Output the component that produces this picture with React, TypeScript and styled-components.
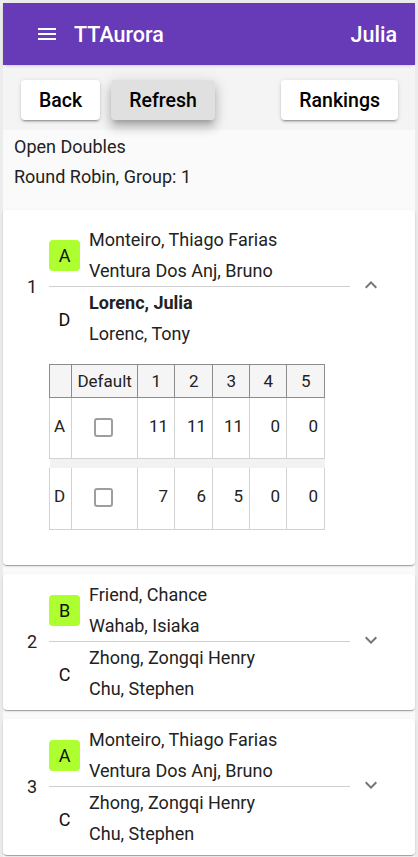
import React from "react";
import styled, { createGlobalStyle } from "styled-components";

const GlobalStyle = createGlobalStyle`
  html, body { margin: 0; padding: 0; }
  body {
    font-family: Roboto, "Noto Sans", Arial, sans-serif;
    background: #ededed;
    color: rgba(0,0,0,0.87);
  }
  * { box-sizing: border-box; }
`;

const Frame = styled.div`
  border: 3px solid #ececec;
  border-bottom: none;
  min-height: 857px;
  background: #fafafa;
`;

const AppBar = styled.header`
  height: 62px;
  background: #673ab7;
  color: #fff;
  display: flex;
  align-items: center;
  padding: 0 18px 0 31px;
  box-shadow: 0 2px 4px -1px rgba(0,0,0,.2);
`;

const MenuBtn = styled.span`
  display: flex;
  width: 26px;
  height: 26px;
  align-items: center;
  justify-content: center;
  margin-right: 14px;
`;

const Title = styled.div`
  font-size: 21.5px;
  font-weight: 500;
  flex: 1;
`;

const User = styled.div`
  font-size: 21.5px;
  font-weight: 500;
`;

const ButtonBar = styled.div`
  margin-top: 3px;
  background: #f4f4f4;
  display: flex;
  align-items: center;
  padding: 12px 17px 10px 18px;
  gap: 11px;
`;

const Btn = styled.button<{ $raised?: boolean; $push?: boolean }>`
  height: 40px;
  padding: 0 18px;
  border: none;
  border-radius: 4px;
  font-family: Roboto, Arial, sans-serif;
  font-size: 19.5px;
  font-weight: 500;
  color: #000;
  background: ${(p) => (p.$raised ? "#e0e0e0" : "#fff")};
  margin-left: ${(p) => (p.$push ? "auto" : "0")};
  box-shadow: ${(p) =>
    p.$raised
      ? "0 5px 5px -3px rgba(0,0,0,.2), 0 8px 10px 1px rgba(0,0,0,.14), 0 3px 14px 2px rgba(0,0,0,.12)"
      : "0 3px 1px -2px rgba(0,0,0,.2), 0 2px 2px 0 rgba(0,0,0,.14), 0 1px 5px 0 rgba(0,0,0,.12)"};
`;

const Info = styled.div`
  padding: 2px 11px 0 11px;
`;

const InfoLine = styled.div`
  font-size: 18px;
  line-height: 30px;
  color: #222;
`;

const List = styled.div`
  margin-top: 18px;
  display: flex;
  flex-direction: column;
  gap: 9px;
`;

const Card = styled.section<{ $expanded?: boolean }>`
  background: #fff;
  border-radius: 4px;
  padding: ${(p) => (p.$expanded ? "14px 0 35px" : "5px 0 6px")};
  box-shadow: 0 2px 1px -1px rgba(0,0,0,.2), 0 1px 1px 0 rgba(0,0,0,.14), 0 1px 3px 0 rgba(0,0,0,.12);
`;

const MatchRow = styled.div`
  display: flex;
  align-items: center;
`;

const Num = styled.div`
  width: 46px;
  padding-left: 24px;
  font-size: 18px;
  color: #222;
`;

const Teams = styled.div`
  width: 301px;
`;

const Divider = styled.div`
  height: 1px;
  background: #cfcfcf;
`;

const TeamRow = styled.div`
  display: flex;
  align-items: center;
  gap: 9px;
`;

const Letter = styled.div<{ $badge?: boolean }>`
  width: 31px;
  height: 31px;
  border-radius: 4px;
  background: ${(p) => (p.$badge ? "#adff2f" : "transparent")};
  display: flex;
  align-items: center;
  justify-content: center;
  font-size: 18px;
  color: #111;
  padding-top: ${(p) => (p.$badge ? "0" : "3px")};
`;

const Names = styled.div``;

const Name = styled.div<{ $me?: boolean }>`
  font-size: 18px;
  line-height: 31px;
  font-weight: ${(p) => (p.$me ? 700 : 400)};
  color: #222;
  white-space: nowrap;
`;

const Chevron = styled.span<{ $up?: boolean }>`
  display: flex;
  margin-left: 9px;
  margin-top: -4px;
  transform: ${(p) => (p.$up ? "rotate(180deg)" : "none")};
`;

const TableWrap = styled.div`
  margin: 15px 0 0 46px;
`;

const ScoreTable = styled.table`
  border-collapse: collapse;
  font-size: 17px;
  color: #222;
`;

const Th = styled.th<{ $w: number }>`
  width: ${(p) => p.$w}px;
  height: 33px;
  background: #f5f5f5;
  border: 1px solid #8c8c8c;
  font-weight: 400;
  text-align: center;
  padding: 0;
`;

const Td = styled.td<{ $align?: string; $h: number }>`
  height: ${(p) => p.$h}px;
  border: 1px solid #d2d2d2;
  border-top: none;
  text-align: ${(p) => p.$align || "right"};
  padding: 0 6px 4px 4px;
  vertical-align: middle;
`;

const GapRow = styled.tr`
  height: 9px;
  background: #f2f2f2;
`;

const Box = styled.span`
  display: inline-block;
  width: 19px;
  height: 19px;
  border: 2px solid #9e9e9e;
  border-radius: 3px;
  vertical-align: middle;
`;

const MenuIcon = () => (
  <svg width="24" height="24" viewBox="0 0 24 24" fill="#fff">
    <path d="M3 18h18v-2H3zm0-5h18v-2H3zm0-7v2h18V6z" />
  </svg>
);

const ExpandIcon = () => (
  <svg width="24" height="24" viewBox="0 0 24 24" fill="#757575">
    <path d="M16.59 8.59 12 13.17 7.41 8.59 6 10l6 6 6-6z" />
  </svg>
);

type Team = { letter: string; badge?: boolean; players: { name: string; me?: boolean }[] };
type Match = { num: number; t1: Team; t2: Team; expanded?: boolean; scores?: number[][] };

const matches: Match[] = [
  {
    num: 1,
    expanded: true,
    t1: { letter: "A", badge: true, players: [{ name: "Monteiro, Thiago Farias" }, { name: "Ventura Dos Anj, Bruno" }] },
    t2: { letter: "D", players: [{ name: "Lorenc, Julia", me: true }, { name: "Lorenc, Tony" }] },
    scores: [
      [11, 11, 11, 0, 0],
      [7, 6, 5, 0, 0],
    ],
  },
  {
    num: 2,
    t1: { letter: "B", badge: true, players: [{ name: "Friend, Chance" }, { name: "Wahab, Isiaka" }] },
    t2: { letter: "C", players: [{ name: "Zhong, Zongqi Henry" }, { name: "Chu, Stephen" }] },
  },
  {
    num: 3,
    t1: { letter: "A", badge: true, players: [{ name: "Monteiro, Thiago Farias" }, { name: "Ventura Dos Anj, Bruno" }] },
    t2: { letter: "C", players: [{ name: "Zhong, Zongqi Henry" }, { name: "Chu, Stephen" }] },
  },
];

const TeamBlock = ({ team }: { team: Team }) => (
  <TeamRow>
    <Letter $badge={team.badge}>{team.letter}</Letter>
    <Names>
      {team.players.map((p) => (
        <Name key={p.name} $me={p.me}>
          {p.name}
        </Name>
      ))}
    </Names>
  </TeamRow>
);

const widths = [22, 66, 37, 38, 37, 37, 38];

const Scores = ({ m }: { m: Match }) => (
  <TableWrap>
    <ScoreTable>
      <thead>
        <tr>
          <Th $w={widths[0]}></Th>
          <Th $w={widths[1]}>Default</Th>
          {[1, 2, 3, 4, 5].map((g, i) => (
            <Th key={g} $w={widths[i + 2]}>
              {g}
            </Th>
          ))}
        </tr>
      </thead>
      <tbody>
        <tr>
          <Td $h={61} $align="left">{m.t1.letter}</Td>
          <Td $h={61} $align="center"><Box /></Td>
          {m.scores![0].map((s, i) => (
            <Td $h={61} key={i}>{s}</Td>
          ))}
        </tr>
        <GapRow>
          <td colSpan={7}></td>
        </GapRow>
        <tr>
          <Td $h={62} $align="left">{m.t2.letter}</Td>
          <Td $h={62} $align="center"><Box /></Td>
          {m.scores![1].map((s, i) => (
            <Td $h={62} key={i}>{s}</Td>
          ))}
        </tr>
      </tbody>
    </ScoreTable>
  </TableWrap>
);

export default function App() {
  return (
    <>
      <GlobalStyle />
      <Frame>
        <AppBar>
          <MenuBtn>
            <MenuIcon />
          </MenuBtn>
          <Title>TTAurora</Title>
          <User>Julia</User>
        </AppBar>
        <ButtonBar>
          <Btn>Back</Btn>
          <Btn $raised>Refresh</Btn>
          <Btn $push>Rankings</Btn>
        </ButtonBar>
        <Info>
          <InfoLine>Open Doubles</InfoLine>
          <InfoLine>Round Robin, Group: 1</InfoLine>
        </Info>
        <List>
          {matches.map((m) => (
            <Card key={m.num} $expanded={m.expanded}>
              <MatchRow>
                <Num>{m.num}</Num>
                <Teams>
                  <TeamBlock team={m.t1} />
                  <Divider />
                  <TeamBlock team={m.t2} />
                </Teams>
                <Chevron $up={m.expanded}>
                  <ExpandIcon />
                </Chevron>
              </MatchRow>
              {m.expanded && <Scores m={m} />}
            </Card>
          ))}
        </List>
      </Frame>
    </>
  );
}
